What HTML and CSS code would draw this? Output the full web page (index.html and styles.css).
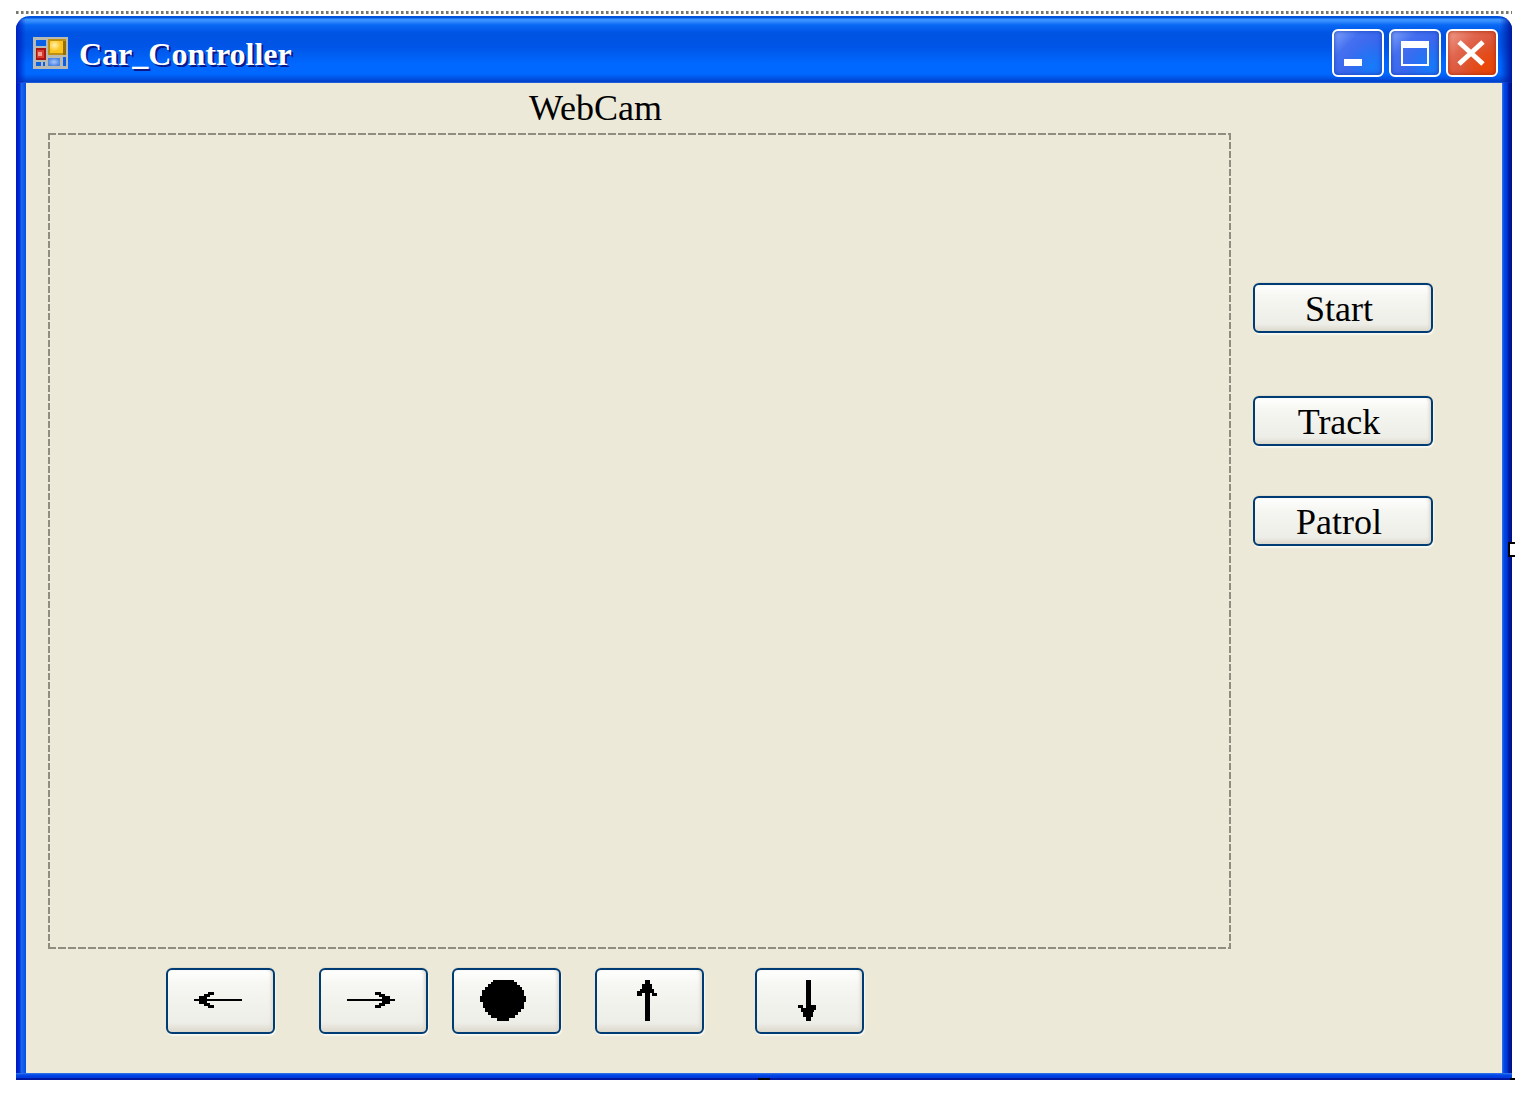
FILE: index.html
```html
<!DOCTYPE html>
<html lang="en">
<head>
  <meta charset="UTF-8" />
  <meta name="viewport" content="width=device-width, initial-scale=1.0"/>
  <title>Car_Controller</title>
  <link rel="stylesheet" href="styles.css">
</head>
<body>
  <div class="window">
    <header class="titlebar">
      <svg class="app-icon" viewBox="0 0 35 32" shape-rendering="crispEdges" aria-hidden="true">
        <defs>
          <radialGradient id="gold" cx="35%" cy="35%">
            <stop offset="0" stop-color="#fff3b0"/>
            <stop offset="1" stop-color="#fcc41c"/>
          </radialGradient>
          <radialGradient id="sky">
            <stop offset="0" stop-color="#a9c8fb"/>
            <stop offset="1" stop-color="#4c84e4"/>
          </radialGradient>
        </defs>
        <rect width="35" height="32" fill="#b9b9b4"/>
        <rect x="3" y="3" width="10" height="6" fill="#0860e8"/>
        <rect x="3" y="11" width="10" height="12" fill="#a81410"/>
        <rect x="4" y="13" width="7" height="8" fill="#d83c30"/>
        <rect x="5" y="15" width="4" height="4" fill="#f4a090"/>
        <rect x="15" y="2" width="18" height="16" fill="#c09010"/>
        <rect x="30" y="4" width="3" height="14" fill="#947000"/>
        <rect x="17" y="4" width="13" height="12" fill="url(#gold)"/>
        <rect x="15" y="21" width="12" height="8" fill="url(#sky)"/>
        <rect x="3" y="25" width="5" height="4" fill="#0860e8"/>
        <rect x="10" y="25" width="2" height="4" fill="#0860e8"/>
        <rect x="30" y="20" width="3" height="9" fill="#0860e8"/>
      </svg>
      <h1>Car_Controller</h1>
      <div class="caption-buttons">
        <button type="button" aria-label="Minimize">
          <svg viewBox="0 0 48 44" shape-rendering="crispEdges"><rect x="10" y="28" width="18" height="7" fill="#fff"/></svg>
        </button>
        <button type="button" aria-label="Maximize">
          <svg viewBox="0 0 48 44" shape-rendering="crispEdges"><path d="M10 10h28v25H10zM12 17v16h24V17z" fill="#fff" fill-rule="evenodd"/></svg>
        </button>
        <button type="button" class="close" aria-label="Close">
          <svg viewBox="0 0 48 44"><path d="M11 11L35 33M35 11L11 33" stroke="#fff" stroke-width="5"/></svg>
        </button>
      </div>
    </header>

    <main class="client">
      <h2>WebCam</h2>
      <div class="webcam"></div>
      <div class="actions">
        <button type="button" class="start">Start</button>
        <button type="button">Track</button>
        <button type="button">Patrol</button>
      </div>
      <div class="drive">
        <button type="button" aria-label="Left">
          <svg width="48" height="16" viewBox="0 0 48 16">
            <path d="M0 7H5V4H10V2H14V0H20V3H16V5H13V7H48V9H13V11H16V13H20V16H14V14H10V12H5V9H0z"/>
          </svg>
        </button>
        <button type="button" aria-label="Right">
          <svg width="48" height="16" viewBox="0 0 48 16">
            <path d="M48 7H43V4H38V2H34V0H28V3H32V5H35V7H0V9H35V11H32V13H28V16H34V14H38V12H43V9H48z"/>
          </svg>
        </button>
        <button type="button" aria-label="Stop">
          <svg width="47" height="41" viewBox="0 0 47 41">
            <path d="M13 0H34V2H37V5H40V7H42V10H44V16H46V22H44V29H41V32H38V35H35V38H29V41H17V38H11V35H8V32H5V28H3V22H0V16H2V10H5V7H8V4H11V2H13z"/>
          </svg>
        </button>
        <button type="button" aria-label="Forward">
          <svg width="20" height="41" viewBox="0 0 20 41">
            <path d="M8 0H13V4H15V9H17V13H20V16H15V13H13V41H8V13H5V16H0V11H3V9H5V4H8z"/>
          </svg>
        </button>
        <button type="button" aria-label="Backward">
          <svg width="18" height="41" viewBox="0 0 18 41">
            <path d="M8 0H13V25H18V30H16V32H15V37H13V41H8V37H5V32H3V28H0V25H5V28H8z"/>
          </svg>
        </button>
      </div>
    </main>

    <span class="handle handle-right"></span>
    <span class="handle handle-bottom"></span>
    <span class="handle handle-corner"></span>
  </div>
</body>
</html>
```
FILE: styles.css
```css
* {
  box-sizing: border-box;
}

body {
  margin: 0;
  padding: 11px 12px 18px 16px;
  min-height: 100vh;
  display: flex;
  flex-direction: column;
  background: #fff;
  color: #000;
  font-family: "Liberation Serif", "Times New Roman", serif;
}

/* dotted selection line above the window */
body::before {
  content: "";
  height: 3px;
  margin-bottom: 2px;
  background: repeating-linear-gradient(to right, #77776e 0 2px, #b4b4ae 2px 3px, #fff 3px 5px);
}

button {
  font: inherit;
  color: inherit;
  cursor: pointer;
}

.window {
  position: relative;
  flex: 1;
  display: flex;
  flex-direction: column;
  padding: 0 10px 7px;
  border-radius: 14px 14px 0 0;
  background:
    linear-gradient(to bottom, #3c78e8 0, #0048e8 2px, #0038d8 5px, #0018a0 5px) bottom / 100% 7px no-repeat,
    linear-gradient(to right, #0018c0 0, #0030d8 4px, #1c68f0 5px, #0050e0 10px) left / 10px 100% no-repeat,
    linear-gradient(to right, #3c78e8 0, #0048e8 2px, #0038d8 5px, #0018a0 7px, #001080 10px) right / 10px 100% no-repeat;
}

.titlebar {
  display: flex;
  align-items: center;
  height: 67px;
  margin: 0 -10px;
  padding: 6px 14px 0 17px;
  border-radius: 14px 14px 0 0;
  background:
    linear-gradient(to right, #0020c0 0, rgba(0, 60, 220, 0) 10px),
    linear-gradient(to left, #0018a0 0, rgba(0, 40, 200, 0) 12px),
    linear-gradient(to bottom, #0054dc 0, #0054dc 2px, #3c96ff 3px, #3890ff 5px, #0868f4 9px, #0054e3 17px, #0054e6 30px, #0068ff 48px, #0068ff 58px, #0050e0 63px, #0040c8 66px, #3c78e8 67px);
}

.app-icon {
  width: 35px;
  height: 32px;
}

.titlebar h1 {
  flex: 1;
  margin: 0 0 0 11px;
  padding-top: 2px;
  color: #fff;
  font-size: 32px;
  line-height: 36px;
  text-shadow: 2px 2px 0 #0c1888;
}

.caption-buttons {
  display: flex;
  gap: 5px;
}

.caption-buttons button {
  width: 52px;
  height: 48px;
  padding: 0;
  border: 2px solid #fff;
  border-radius: 6px;
  background:
    radial-gradient(circle at 80% 80%, rgba(16, 132, 255, 0.8), rgba(16, 132, 255, 0) 50%),
    linear-gradient(135deg, #84a4fa 0, #4470f0 30%, #2858e8 100%);
  box-shadow: inset 0 0 4px #1440b8;
}

.caption-buttons .close {
  background:
    radial-gradient(circle at 80% 80%, rgba(240, 72, 0, 0.8), rgba(240, 72, 0, 0) 50%),
    linear-gradient(135deg, #f0a090 0, #e0644c 35%, #d03c14 100%);
  box-shadow: inset 0 0 4px #a82808;
}

.caption-buttons svg {
  display: block;
  width: 48px;
  height: 44px;
}

.client {
  flex: 1;
  display: grid;
  grid-template-columns: 1fr 180px;
  grid-template-rows: 50px 1fr auto;
  column-gap: 22px;
  padding: 0 69px 39px 22px;
  background: #ece9d8;
}

.client h2 {
  margin: 0;
  padding: 5px 88px 0 0;
  font-size: 36px;
  font-weight: normal;
  line-height: 40px;
  text-align: center;
}

.webcam {
  grid-row: 2;
  min-height: 480px;
  background:
    repeating-linear-gradient(to right, #8f8d80 0 8px, transparent 8px 10px) top / 100% 2px no-repeat,
    repeating-linear-gradient(to right, #8f8d80 0 8px, transparent 8px 10px) bottom / 100% 2px no-repeat,
    repeating-linear-gradient(to bottom, #8f8d80 0 7px, transparent 7px 9px) left / 2px 100% no-repeat,
    repeating-linear-gradient(to bottom, #8f8d80 0 7px, transparent 7px 9px) right / 2px 100% no-repeat;
}

.actions button,
.drive button {
  display: flex;
  align-items: center;
  justify-content: center;
  border: 2px solid #003c74;
  border-radius: 6px;
  background: linear-gradient(to bottom, #fff 0, #f6f6f2 25%, #eeeee8 85%, #dcd8cc 100%);
  box-shadow: inset -3px 0 3px -1px #dedad0, 1px 2px 1px #f8f7f0, 0 -1px 1px #dfdccb;
}

.actions {
  grid-row: 2;
  grid-column: 2;
  display: flex;
  flex-direction: column;
  gap: 50px;
  padding-top: 150px;
  font-size: 36px;
  line-height: 44px;
}

.actions button {
  height: 50px;
  padding: 2px 8px 0 0;
}

.actions .start {
  margin-bottom: 13px;
}

.drive {
  grid-row: 3;
  display: grid;
  grid-template-columns: 153px 133px 143px 160px 109px;
  padding: 19px 0 0 118px;
}

.drive button {
  width: 109px;
  height: 66px;
  padding: 0 6px 2px 0;
}

.drive svg {
  fill: #000;
  shape-rendering: crispEdges;
}

/* resize handles */
.handle {
  position: absolute;
  background: #000;
}

.handle-right {
  top: 50%;
  right: -3px;
  width: 7px;
  height: 15px;
  margin-top: -6px;
  border: 2px solid #000;
  border-right: 0;
  background: #fff;
}

.handle-bottom {
  bottom: 0;
  left: 50%;
  width: 12px;
  height: 2px;
  margin-left: -6px;
}

.handle-corner {
  right: -3px;
  bottom: 0;
  width: 5px;
  height: 2px;
}
```
